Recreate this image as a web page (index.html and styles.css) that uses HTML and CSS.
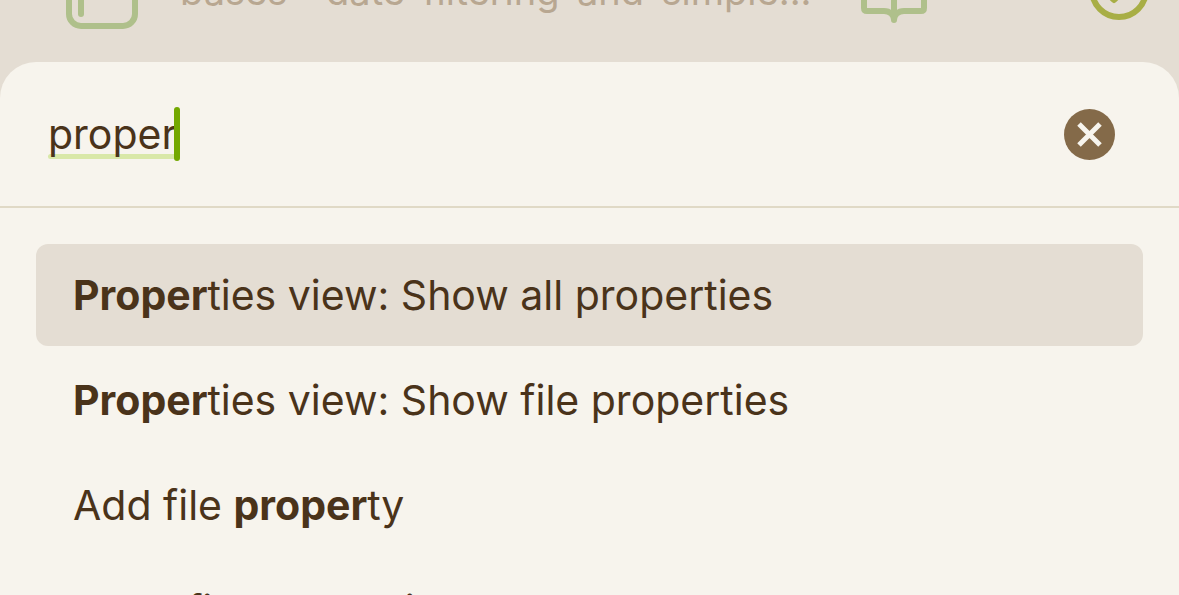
FILE: index.html
```html
<!DOCTYPE html>
<html lang="en">
<head>
<meta charset="utf-8">
<meta name="viewport" content="width=device-width, initial-scale=1">
<title>Command palette</title>
<link rel="stylesheet" href="styles.css">
</head>
<body>
<div class="app">
  <header class="toolbar">
    <button class="tool" type="button" aria-label="Toggle sidebar">
      <svg class="icon" width="80" height="80" viewBox="0 0 80 80"><rect x="7" y="12" width="66" height="61" rx="12"/><path d="M19 24V61"/></svg>
    </button>
    <h1 class="title">bases - date-filtering-and-simple...</h1>
    <button class="tool" type="button" aria-label="Reading view">
      <svg class="icon" width="80" height="80" viewBox="0 0 80 80"><path d="M40 24V67M40 67C40 62 36 58 30 58H13Q10 58 10 55V13Q10 10 13 10H28Q40 10 40 24Q40 10 52 10H67Q70 10 70 13V55Q70 58 67 58H50C44 58 40 62 40 67"/></svg>
    </button>
    <button class="tool tool-status" type="button" aria-label="Sync status">
      <svg class="icon" width="80" height="80" viewBox="0 0 80 80"><circle cx="40" cy="40" r="27"/><path d="M25 40L35 50L53 32"/></svg>
    </button>
  </header>
  <main class="palette">
    <form class="search">
      <span class="field">
        <input class="query" type="text" size="6" value="proper" aria-label="Search commands">
      </span>
      <button class="clear" type="reset" aria-label="Clear search">
        <svg width="51" height="51" viewBox="0 0 51 51"><circle cx="25.5" cy="25.5" r="25.5" fill="#846a49"/><path d="M15 15L36 36M36 15L15 36" stroke="#f7f4ed" stroke-width="5"/></svg>
      </button>
    </form>
    <div class="results" role="listbox" aria-label="Commands">
      <button class="result selected" type="button" role="option" aria-selected="true"><b>Proper</b>ties view: Show all properties</button>
      <button class="result" type="button" role="option"><b>Proper</b>ties view: Show file properties</button>
      <button class="result" type="button" role="option">Add file <b>proper</b>ty</button>
      <button class="result" type="button" role="option">Clear file <b>proper</b>ties</button>
    </div>
  </main>
</div>
</body>
</html>
```
FILE: styles.css
```css
* { box-sizing: border-box; }
body {
  margin: 0;
  background: #e4ddd3;
  color: #4a331a;
  font: 41px/54px Inter, "Liberation Sans", sans-serif;
}
button, input { font: inherit; color: inherit; border: 0; padding: 0; background: none; }
.app { height: 100vh; overflow: hidden; display: flex; flex-direction: column; }
.toolbar {
  flex: none;
  height: 62px;
  padding: 0 20px 32px 62px;
  display: flex;
  align-items: flex-end;
}
.tool { flex: none; display: flex; color: #afc08b; margin-bottom: -3px; }
.tool + .tool { margin-left: 145px; }
.tool-status { color: #a8ae45; margin-bottom: 0; }
.icon { display: block; fill: none; stroke: currentColor; stroke-width: 6; stroke-linecap: round; stroke-linejoin: round; }
.title {
  flex: 1;
  min-width: 0;
  margin: 0 12px 12px 38px;
  color: #b8a791;
  font-size: 38px;
  font-weight: 400;
  white-space: nowrap;
}
.palette {
  flex: none;
  background: #f7f4ed;
  border-radius: 36px 36px 0 0;
}
.search {
  display: flex;
  align-items: center;
  justify-content: space-between;
  height: 146px;
  padding: 0 64px 0 48px;
  border-bottom: 2px solid #e0d9c6;
}
.field { position: relative; isolation: isolate; display: flex; }
.field::before {
  content: "";
  position: absolute;
  z-index: -1;
  inset: auto 0 2px 0;
  height: 5px;
  border-radius: 3px;
  background: #d9e8a8;
}
.field::after {
  content: "";
  position: absolute;
  inset: 0 -3px 0 auto;
  width: 6px;
  border-radius: 3px;
  background: #73a800;
}
.query { height: 54px; field-sizing: content; outline: none; }
.clear { display: flex; }
.results { padding: 36px; display: flex; flex-direction: column; gap: 3px; }
.result {
  padding: 24px 37px;
  text-align: left;
  white-space: nowrap;
  border-radius: 12px;
}
.selected { background: #e4ddd3; }
b { font-weight: 700; }
```
